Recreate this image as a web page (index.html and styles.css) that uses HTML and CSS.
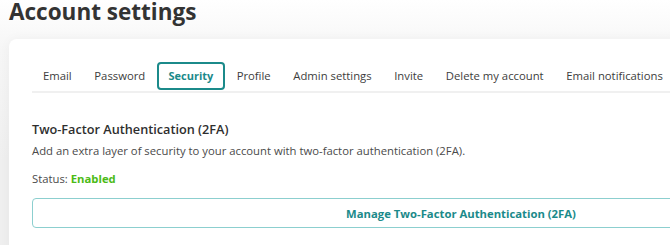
FILE: index.html
```html
<!DOCTYPE html>
<html lang="en">
<head>
<meta charset="utf-8">
<title>Account settings</title>
<link rel="stylesheet" href="styles.css">
</head>
<body>
<div class="page">
  <h1 class="title">Account settings</h1>
  <div class="card">
    <nav class="tabs">
      <a class="tab">Email</a>
      <a class="tab">Password</a>
      <a class="tab active">Security</a>
      <a class="tab">Profile</a>
      <a class="tab">Admin settings</a>
      <a class="tab">Invite</a>
      <a class="tab">Delete my account</a>
      <a class="tab">Email notifications</a>
    </nav>
    <section class="section">
      <h2 class="section-title">Two-Factor Authentication (2FA)</h2>
      <p class="desc">Add an extra layer of security to your account with two-factor authentication (2FA).</p>
      <p class="status">Status: <strong class="enabled">Enabled</strong></p>
      <button class="btn">Manage Two-Factor Authentication (2FA)</button>
    </section>
  </div>
</div>
</body>
</html>
```

FILE: styles.css
```css
html, body {
  margin: 0;
  padding: 0;
  overflow: hidden;
}
body {
  background: linear-gradient(to bottom, #ffffff 0px, #f6f6f6 50px, #efefef 160px);
  font-family: "Open Sans", "Liberation Sans", sans-serif;
  color: #444;
  min-height: 245px;
}
.page {
  width: 940px;
  padding: 0 0 0 9px;
}
.title {
  margin: 0;
  font-size: 22.5px;
  line-height: 24px;
  font-weight: 700;
  color: #333;
}
.card {
  margin-top: 15px;
  background: #fff;
  border-radius: 8px;
  box-shadow: 0 0 12px rgba(0, 0, 0, 0.04);
  padding: 23px 23px 30px;
  width: 858px;
}
.tabs {
  display: flex;
  border-bottom: 2px solid #f0f0f0;
  padding-bottom: 1px;
}
.tab {
  display: block;
  font-size: 11.3px;
  line-height: 24px;
  padding: 0 9.3px;
  border: 2px solid transparent;
  border-radius: 4px;
  color: #3d3d3d;
}
.tab:first-child {
  padding-left: 9px;
}
.active {
  border-color: #1b8a8a;
  color: #1b8a8a;
  font-weight: 700;
  font-size: 11px;
  padding: 0 10px;
}
.section {
  padding-top: 26px;
}
.section-title {
  margin: 0;
  font-size: 12.7px;
  line-height: 20px;
  font-weight: 600;
  color: #2e2e2e;
}
.desc {
  margin: 2px 0 0;
  font-size: 11.3px;
  line-height: 20px;
  color: #4a4a4a;
}
.status {
  margin: 8px 0 0;
  font-size: 11.3px;
  line-height: 20px;
  color: #4a4a4a;
}
.enabled {
  color: #4cbb17;
  font-weight: 700;
}
.btn {
  display: block;
  width: 100%;
  margin-top: 9px;
  height: 30px;
  background: #fff;
  border: 1.5px solid #8ccfcf;
  border-radius: 4px;
  font-family: inherit;
  font-size: 11.3px;
  font-weight: 700;
  color: #1b8a8a;
  cursor: pointer;
}
```
